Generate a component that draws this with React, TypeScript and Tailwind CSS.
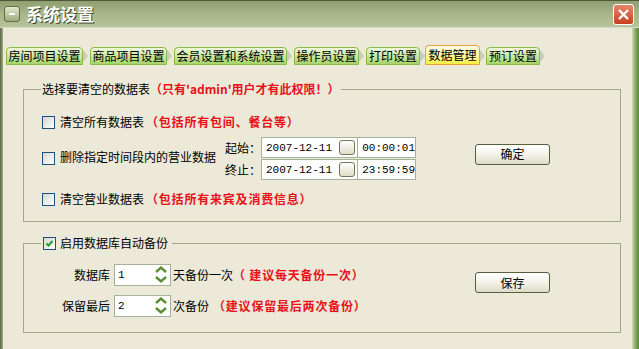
import React from 'react';

const Check = ({ checked }: { checked?: boolean }) => (
  <span className="w-[13px] h-[13px] shrink-0 border border-[#1c5180] bg-gradient-to-br from-[#d6d6cf] to-white flex items-center justify-center">
    {checked && (
      <svg width="9" height="9" viewBox="0 0 9 9">
        <path d="M1.5 4.5 L3.5 6.5 L7.5 2" stroke="#21a121" strokeWidth="2" fill="none" />
      </svg>
    )}
  </span>
);

const XpButton = ({ label }: { label: string }) => (
  <button className="w-[75px] h-[21px] rounded-[3px] border border-[#55603f] bg-gradient-to-b from-white via-[#f4f2e8] to-[#dedbc8] text-[12px] leading-[16px] text-black">
    {label}
  </button>
);

const Arrow = ({ w }: { w: string }) => (
  <div className={`${w} h-[18px] flex items-center`}>
    <svg width="5" height="14" viewBox="0 0 5 14">
      <polygon points="0,1 5,7 0,13" fill="#cbcbbd" />
    </svg>
  </div>
);

const Tab = ({ label, w, active }: { label: string; w: string; active?: boolean }) => (
  <div
    className={
      active
        ? `${w} h-[20px] rounded-t-[4px] border border-[#e3a03c] bg-gradient-to-b from-[#fffce8] to-[#f6ef3c] flex items-center justify-center`
        : `${w} h-[18px] rounded-t-[4px] border border-[#8ab94c] bg-gradient-to-b from-[#eef8dc] to-[#a6d466] flex items-center justify-center`
    }
  >
    {label}
  </div>
);

const Spin = ({ value }: { value: string }) => (
  <div className="w-[57px] h-[22px] border border-[#a3b39a] bg-white flex justify-between">
    <span className="pl-[3px] pt-[2px] font-['Liberation_Mono',monospace] text-[11px]">{value}</span>
    <svg width="14" height="20" viewBox="0 0 14 20" className="mr-[2px]">
      <path d="M2 7 L7 2.5 L12 7" stroke="#5b8c2f" strokeWidth="2.4" fill="none" />
      <path d="M2 12 L7 16.5 L12 12" stroke="#5b8c2f" strokeWidth="2.4" fill="none" />
    </svg>
  </div>
);

const DateTime = ({ date, time }: { date: string; time: string }) => (
  <div className="flex h-[21px] border border-[#a3b39a] bg-white font-['Liberation_Mono',monospace] text-[11px]">
    <div className="w-[96px] flex items-center justify-between pl-[4px] pr-[2px]">
      <span>{date}</span>
      <span className="w-[16px] h-[15px] rounded-[3px] border border-[#6f7a55] bg-gradient-to-b from-white to-[#e0ddc8]" />
    </div>
    <div className="flex-1 border-l border-[#a3b39a] flex items-center pl-[4px]">{time}</div>
  </div>
);

export default function App() {
  return (
    <div className="w-[639px] h-[349px] flex flex-col bg-[#ece9d8] overflow-hidden font-['Noto_Sans_CJK_SC','Liberation_Sans',sans-serif] text-[12px] leading-[16px] text-black">
      {/* title bar */}
      <div className="h-[28px] shrink-0 flex items-center border-t border-[#4c5838] border-b border-b-[#d6dcc4] bg-gradient-to-b from-[#8f9f70] via-[#a8b689] to-[#b7c39c]">
        <span className="ml-[4px] w-[16px] h-[16px] rounded-[3px] border border-[#5f6c45] bg-gradient-to-b from-[#e2e8cc] to-[#9eab7c] flex items-center justify-center">
          <span className="w-[6px] h-[2px] bg-white" />
        </span>
        <span className="ml-[6px] text-[17px] leading-[20px] font-bold text-white [text-shadow:1px_1px_0_#3a4228]">系统设置</span>
        <span className="ml-auto mr-[5px] w-[21px] h-[21px] rounded-[3px] border border-white bg-gradient-to-b from-[#e8836a] to-[#c6401f] flex items-center justify-center">
          <svg width="13" height="13" viewBox="0 0 13 13">
            <path d="M2 2 L11 11 M11 2 L2 11" stroke="white" strokeWidth="2.4" />
          </svg>
        </span>
      </div>

      <div className="flex flex-1 min-h-0">
        <div className="w-[3px] bg-gradient-to-r from-[#56643f] to-[#a3af8a]" />
        <div className="flex-1 flex flex-col">
          {/* tabs */}
          <div className="flex items-end pl-[3px] mt-[17px] h-[20px]">
            <Tab label="房间项目设置" w="w-[77px]" />
            <Arrow w="w-[7px]" />
            <Tab label="商品项目设置" w="w-[77px]" />
            <Arrow w="w-[7px]" />
            <Tab label="会员设置和系统设置" w="w-[113px]" />
            <Arrow w="w-[7px]" />
            <Tab label="操作员设置" w="w-[65px]" />
            <Arrow w="w-[7px]" />
            <Tab label="打印设置" w="w-[54px]" />
            <Arrow w="w-[5px]" />
            <Tab label="数据管理" w="w-[55px]" active />
            <Arrow w="w-[6px]" />
            <Tab label="预订设置" w="w-[54px]" />
            <Arrow w="w-[7px]" />
          </div>

          {/* group 1 */}
          <fieldset className="ml-[20px] mt-[16px] w-[598px] border border-[#a2a78e] pl-[18px] pb-[14px]">
            <legend className="-ml-[1px] px-[1px]">
              选择要清空的数据表
              <span className="text-[#e8101a] font-bold">（只有'admin'用户才有此权限！）</span>
            </legend>
            <div className="flex items-center mt-[17px] h-[16px]">
              <Check />
              <span className="ml-[5px]">清空所有数据表</span>
              <span className="text-[#e8101a] font-bold tracking-[0.8px] ml-[2px]">（包括所有包间、餐台等）</span>
            </div>
            <div className="flex items-center mt-[7px] h-[43px]">
              <Check />
              <span className="ml-[5px] w-[165px] mt-[-3px]">删除指定时间段内的营业数据</span>
              <div className="flex flex-col gap-[1px]">
                <div className="flex items-center">
                  <span className="w-[36px]">起始：</span>
                  <div className="w-[155px]"><DateTime date="2007-12-11" time="00:00:01" /></div>
                </div>
                <div className="flex items-center">
                  <span className="w-[36px]">终止：</span>
                  <div className="w-[155px]"><DateTime date="2007-12-11" time="23:59:59" /></div>
                </div>
              </div>
              <div className="ml-[59px] mb-[9px]">
                <XpButton label="确定" />
              </div>
            </div>
            <div className="flex items-center mt-[11px] h-[16px]">
              <Check />
              <span className="ml-[5px]">清空营业数据表</span>
              <span className="text-[#e8101a] font-bold tracking-[0.8px] ml-[2px]">（包括所有来宾及消费信息）</span>
            </div>
          </fieldset>

          {/* group 2 */}
          <fieldset className="ml-[20px] mt-[13px] w-[598px] border border-[#a2a78e] pl-[18px] pb-[15px]">
            <legend className="-ml-[1px] px-[2px] flex items-center">
              <Check checked />
              <span className="ml-[4px] pr-[2px]">启用数据库自动备份</span>
            </legend>
            <div className="flex">
              <div className="w-[433px] flex flex-col gap-[9px] mt-[13px]">
                <div className="flex items-center">
                  <span className="w-[72px] text-right pr-[4px]">数据库</span>
                  <Spin value="1" />
                  <span className="ml-[2px]">天备份一次</span>
                  <span className="text-[#e8101a] font-bold tracking-[0.8px]">（ 建议每天备份一次）</span>
                </div>
                <div className="flex items-center">
                  <span className="w-[72px] text-right pr-[4px]">保留最后</span>
                  <Spin value="2" />
                  <span className="ml-[2px]">次备份</span>
                  <span className="text-[#e8101a] font-bold tracking-[0.8px] ml-[4px]">（建议保留最后两次备份）</span>
                </div>
              </div>
              <div className="mt-[21px]">
                <XpButton label="保存" />
              </div>
            </div>
          </fieldset>
        </div>
        <div className="w-[7px] bg-gradient-to-r from-[#cfdcb8] via-[#86aa62] to-[#5a863a]" />
      </div>
    </div>
  );
}
